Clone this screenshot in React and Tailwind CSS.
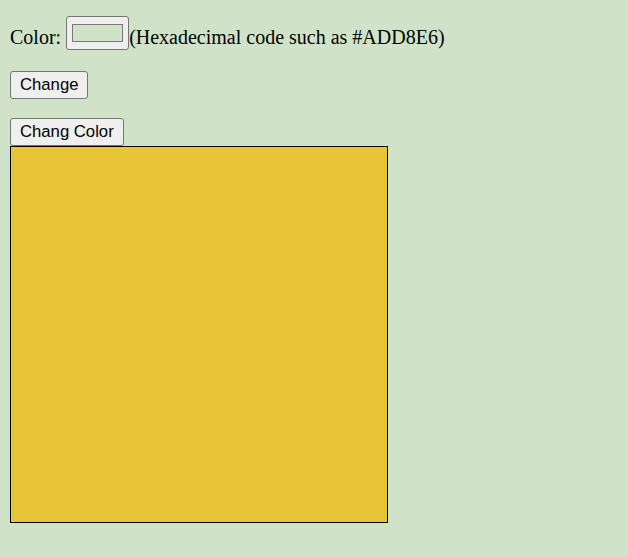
import React from 'react';

export default function App() {
  const [color, setColor] = React.useState('#e8c437');

  return (
    <div className="min-h-[557px] bg-[#d0e3c8] px-[10px] pt-[16px]" style={{ fontFamily: '"Liberation Serif", serif' }}>
      <div className="flex items-start text-[20px] leading-[23px] text-black">
        <span className="mr-[5px] mt-[10px]">Color:</span>
        <button className="flex h-[34px] w-[63px] items-center justify-center rounded-[3px] border border-[#767676] bg-[#efefef]">
          <span className="block h-[18px] w-[51px] border border-[#777] bg-[#d0e3c8]" />
        </button>
        <span className="mt-[10px]">(Hexadecimal code such as #ADD8E6)</span>
      </div>

      <div className="mt-[21px]" style={{ fontFamily: '"Liberation Sans", Arial, sans-serif' }}>
        <button className="h-[28px] rounded-[3px] border border-[#767676] bg-[#efefef] px-[9px] text-[16.7px] text-black">
          Change
        </button>
      </div>

      <div className="mt-[19px]" style={{ fontFamily: '"Liberation Sans", Arial, sans-serif' }}>
        <button
          className="h-[28px] rounded-[3px] border border-[#767676] bg-[#efefef] px-[9px] text-[16.7px] text-black"
          onClick={() => setColor(color)}
        >
          Chang Color
        </button>
      </div>

      <div className="h-[377px] w-[378px] border border-black" style={{ backgroundColor: color }} />
    </div>
  );
}
